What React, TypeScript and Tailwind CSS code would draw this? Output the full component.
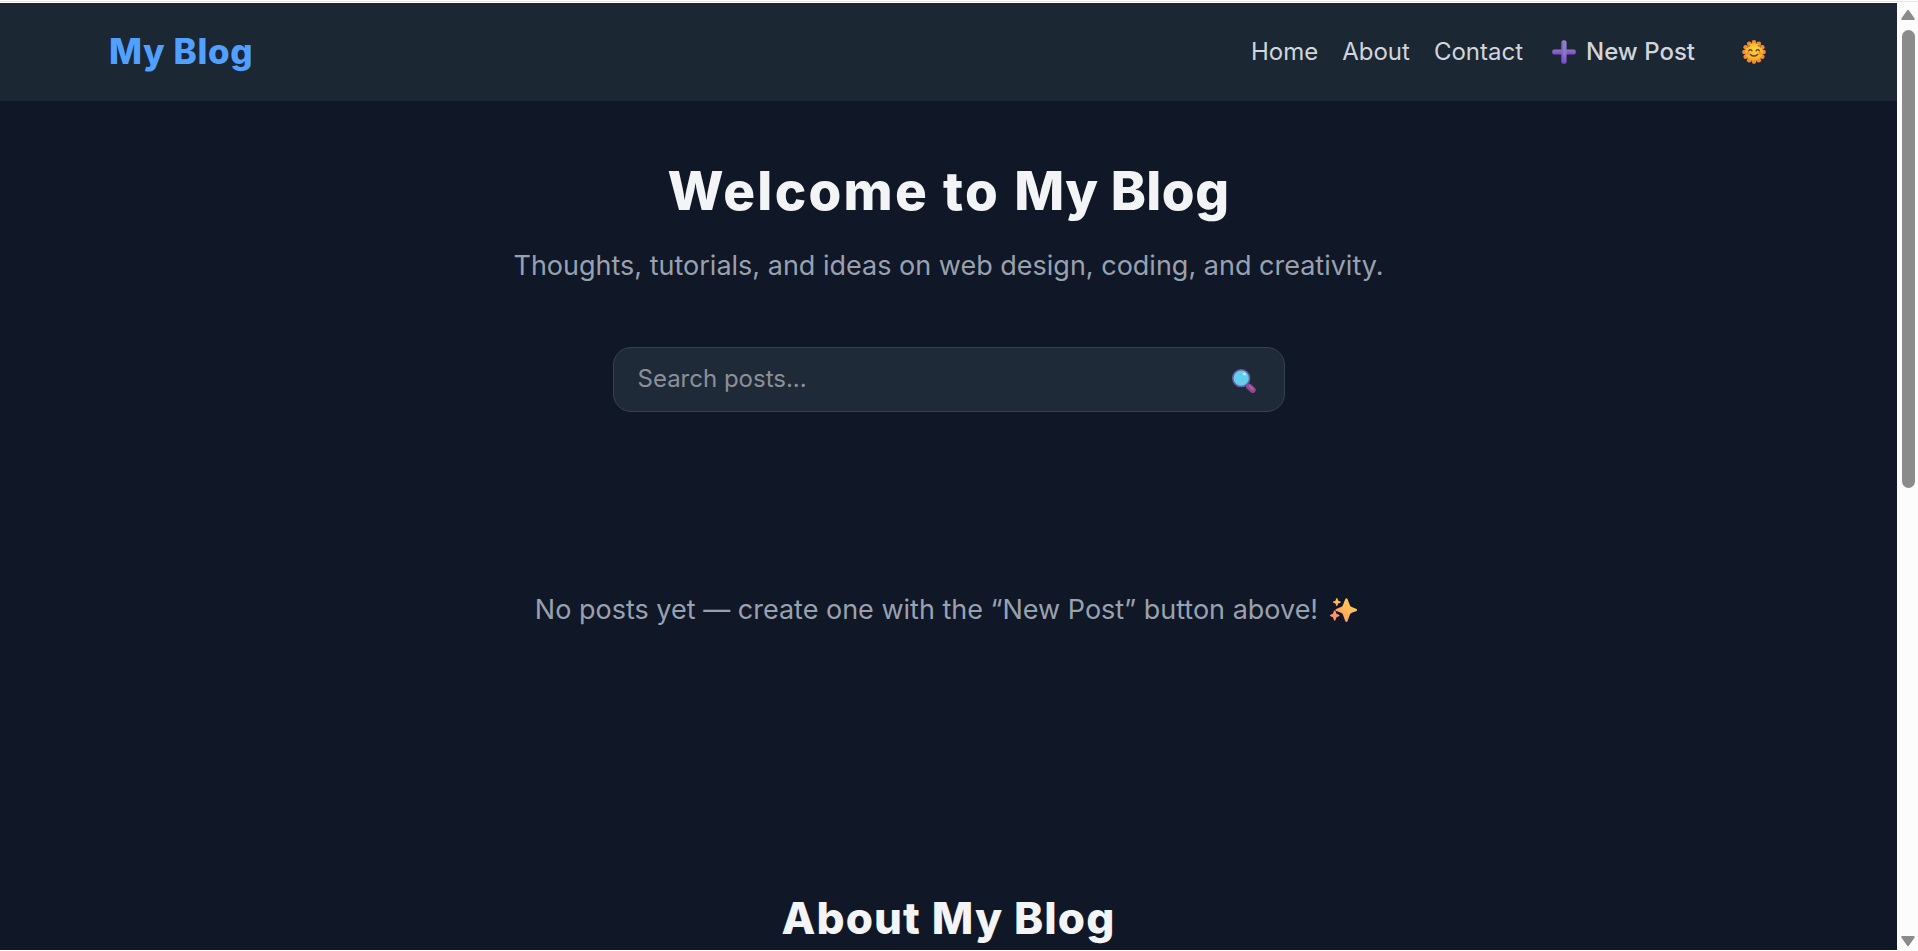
const navLinks = ["Home", "About", "Contact"];

function PlusIcon() {
  return (
    <svg className="h-6 w-6" viewBox="0 0 24 24">
      <defs>
        <linearGradient id="plusBar" x1="0" y1="0" x2="0" y2="1">
          <stop offset="0" stopColor="#8a78b8" />
          <stop offset="0.45" stopColor="#8560c4" />
          <stop offset="1" stopColor="#8243e0" />
        </linearGradient>
        <linearGradient id="plusStem" x1="0" y1="0" x2="0" y2="1">
          <stop offset="0" stopColor="#9180cf" />
          <stop offset="0.6" stopColor="#8a74c4" />
          <stop offset="1" stopColor="#8046d6" />
        </linearGradient>
      </defs>
      <rect x="0.2" y="9.6" width="23.6" height="5" rx="2" fill="url(#plusBar)" />
      <rect x="9.4" y="0.3" width="5.2" height="23.4" rx="2.2" fill="url(#plusStem)" />
      <path d="M10.1 2.2v20" stroke="#7350b8" strokeWidth="0.8" strokeLinecap="round" />
    </svg>
  );
}

function SunIcon() {
  // twelve small bumps around the face
  const rays = Array.from({ length: 12 }, (_, i) => {
    const a = (i * Math.PI) / 6;
    return { x: 12 + 9.6 * Math.sin(a), y: 12 - 9.6 * Math.cos(a) };
  });
  return (
    <svg className="h-6 w-6" viewBox="0 0 24 24">
      <defs>
        <radialGradient id="sunFace" cx="0.55" cy="0.35" r="0.7">
          <stop offset="0" stopColor="#ffd044" />
          <stop offset="0.65" stopColor="#fbb92b" />
          <stop offset="1" stopColor="#f0962b" />
        </radialGradient>
      </defs>
      {rays.map((r, i) => (
        <circle key={i} cx={r.x} cy={r.y} r="2.3" fill="#f58a32" />
      ))}
      <circle cx="12" cy="12" r="9" fill="url(#sunFace)" />
      <circle cx="6.1" cy="13.3" r="1.7" fill="#f7882f" opacity="0.75" />
      <circle cx="17.9" cy="13.3" r="1.7" fill="#f7882f" opacity="0.75" />
      <g fill="none" stroke="#5e3f20" strokeLinecap="round">
        <path d="M6.6 10.8q1.7-2.4 3.4 0M14 10.8q1.7-2.4 3.4 0" strokeWidth="1.3" />
        <path d="M8.4 14.4q3.6 3.4 7.2 0" strokeWidth="1.4" />
        <path d="M5.2 7.2q1.2-1.4 2.6-1.5M16.2 5.7q1.5.1 2.6 1.5" strokeWidth="0.8" />
      </g>
    </svg>
  );
}

function SearchIcon() {
  return (
    <svg className="h-6 w-6" viewBox="0 0 24 24">
      <path d="M14.2 15l2.4 2.2" stroke="#7d4a86" strokeWidth="3.4" />
      <path d="M17 17.6l3.7 3.3" stroke="#91498f" strokeWidth="6" strokeLinecap="round" />
      <path d="M17.6 17.2l3.2 2.8" stroke="#ac62a4" strokeWidth="1.8" strokeLinecap="round" />
      <circle cx="9.2" cy="9.2" r="8.4" fill="#63cdea" stroke="#6461a5" strokeWidth="1.5" />
      <ellipse cx="12.4" cy="5" rx="1.7" ry="1.4" fill="#b5eafa" transform="rotate(35 12.4 5)" />
    </svg>
  );
}

function SparklesIcon() {
  return (
    <svg className="h-[27px] w-[27px]" viewBox="0 0 27 27">
      <defs>
        <linearGradient id="sparkle" x1="1" y1="0" x2="0" y2="1">
          <stop offset="0" stopColor="#ffcd55" />
          <stop offset="0.5" stopColor="#ffb95a" />
          <stop offset="1" stopColor="#ff8766" />
        </linearGradient>
      </defs>
      <g fill="url(#sparkle)">
        <path d="M15.2 2.3q1.2-2 2.4 0l2.3 5.9q.6 1.4 1.9 1.9l4.8 1.8q1.6 1 0 2l-4.8 1.8q-1.3.5-1.9 1.9l-2.3 6.5q-1.2 2-2.4 0l-2.3-6.5q-.6-1.4-1.9-1.9l-4.8-1.8q-1.6-1 0-2l4.8-1.8q1.3-.5 1.9-1.9z" />
        <path d="M6.2 1.6q.6-1.2 1.2 0l.8 2.1 2.1.8q1.2.6 0 1.2l-2.1.8-.8 2.1q-.6 1.2-1.2 0l-.8-2.1-2.1-.8q-1.2-.6 0-1.2l2.1-.8z" />
        <path fill="#ff9468" d="M3.9 14q.8-1.6 1.6 0l1 2.8 2.4 1q1.4.7 0 1.4l-2.4 1-1 2.8q-.8 1.6-1.6 0l-1-2.8-2.4-1q-1.4-.7 0-1.4l2.4-1z" />
      </g>
    </svg>
  );
}

function Navbar() {
  return (
    <header className="flex h-[98px] shrink-0 items-center justify-between bg-[#1b2733] pr-[131px] pl-[109px]">
      <a href="#" className="mb-0.5 text-[35px] leading-[54px] font-extrabold tracking-[0.6px] text-[#519fff]">
        My Blog
      </a>
      <nav className="flex items-center text-2xl text-gray-300">
        <div className="flex gap-6">
          {navLinks.map((link) => (
            <a key={link} href="#">
              {link}
            </a>
          ))}
        </div>
        <button className="ml-[29px] flex items-center gap-2.5 font-medium">
          <PlusIcon />
          New Post
        </button>
        <button className="ml-[47px]" aria-label="Toggle theme">
          <SunIcon />
        </button>
      </nav>
    </header>
  );
}

function Scrollbar() {
  return (
    <div className="flex w-[21px] shrink-0 flex-col items-center bg-[#fcfcfc] pt-1.5 pb-1 pl-px">
      <svg className="h-3 w-4" viewBox="0 0 16 12">
        <path d="M8 1.8L13.8 10H2.2z" fill="#8b8b8b" stroke="#8b8b8b" strokeWidth="2" strokeLinejoin="round" />
      </svg>
      <div className="mt-[9px] h-[458px] w-[13px] rounded-full bg-[#8b8b8b]" />
      <svg className="mt-auto h-3 w-4" viewBox="0 0 16 12">
        <path d="M8 10.2L13.8 2H2.2z" fill="#8b8b8b" stroke="#8b8b8b" strokeWidth="2" strokeLinejoin="round" />
      </svg>
    </div>
  );
}

export default function App() {
  return (
    <div className="flex h-[951px] w-full flex-col overflow-hidden bg-white font-['Inter',sans-serif]">
      <div className="h-[3px] shrink-0 border-y border-white bg-[#fbdcd5]" />
      <div className="flex min-h-0 flex-1">
        <div className="mb-px flex min-w-0 flex-1 flex-col overflow-hidden bg-[#101726]">
          <Navbar />
          <main className="flex flex-col items-center pt-[60px]">
            <h1 className="text-[53px] leading-[60px] font-extrabold text-gray-100">
              <span className="tracking-[2.3px]">Welcome to </span>
              <span className="tracking-[0.5px]">My Blog</span>
            </h1>
            <p className="mt-6 text-[27px] leading-[42px] text-gray-400">
              Thoughts, tutorials, and ideas on web design, coding, and creativity.
            </p>
            <div className="mt-[60px] flex h-[65px] w-[672px] items-center rounded-[18px] border border-[#374151] bg-[#1f2a38] pr-7 pl-6">
              <input
                type="text"
                placeholder="Search posts..."
                className="mb-0.5 min-w-0 flex-1 bg-transparent text-2xl text-gray-100 outline-none placeholder:text-[#8b9096]"
              />
              <button className="mt-0.5" aria-label="Search">
                <SearchIcon />
              </button>
            </div>
            <p className="mt-[177px] mr-[5px] flex items-center gap-3 text-[27px] leading-[42px] text-gray-400">
              No posts yet — create one with the “New Post” button above!
              <SparklesIcon />
            </p>
            <h2 className="mt-[260px] text-[44px] leading-[54px] font-extrabold tracking-[1.1px] text-gray-100">
              About My Blog
            </h2>
          </main>
        </div>
        <Scrollbar />
      </div>
    </div>
  );
}
